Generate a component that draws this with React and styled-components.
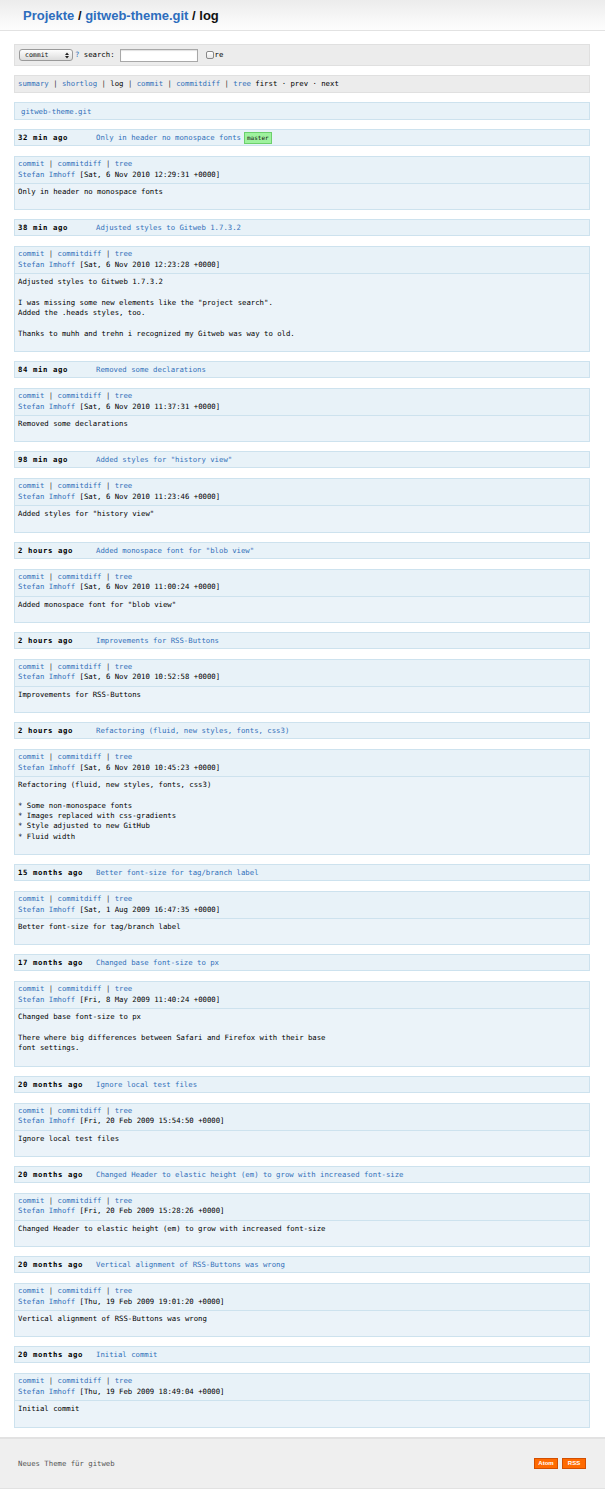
import React from "react";
import styled, { createGlobalStyle } from "styled-components";

const GlobalStyle = createGlobalStyle`
  html, body { margin: 0; padding: 0; background: #fff; }
  body {
    font-family: "DejaVu Sans Mono", "Liberation Mono", monospace;
    font-size: 7.3px;
    color: #000;
  }
  a { color: #3270b9; text-decoration: none; }
`;

const Header = styled.header`
  height: 31px;
  box-sizing: border-box;
  border-bottom: 1px solid #e2e2e2;
  background: linear-gradient(to bottom, #ececec 0%, #f7f7f7 60%, #fdfdfd 100%);
  display: flex;
  align-items: center;
  padding: 1px 0 0 23px;
`;

const Title = styled.h1`
  margin: 0;
  font-family: "Liberation Sans", Arial, sans-serif;
  font-size: 13px;
  font-weight: bold;
  color: #111;
  a { color: #2d6dbd; }
`;

const Main = styled.main`
  padding: 13px 15px 0 14px;
  display: flex;
  flex-direction: column;
`;

const GrayBar = styled.div`
  box-sizing: border-box;
  height: ${(p) => p.$h}px;
  background: #ececec;
  border: 1px solid #e0e0e0;
  display: flex;
  align-items: center;
  padding-left: ${(p) => p.$pl}px;
  margin-bottom: 9px;
  line-height: 10px;
  white-space: pre;
`;

const SelectBox = styled.div`
  box-sizing: border-box;
  width: 54px;
  height: 12px;
  border: 1px solid #9a9a9a;
  border-radius: 3px;
  background: linear-gradient(to bottom, #fdfdfd, #dcdcdc);
  display: flex;
  align-items: center;
  justify-content: space-between;
  padding: 0 3px 0 5px;
  font-size: 6.5px;
  color: #111;
`;

const Arrows = styled.svg`
  width: 4px;
  height: 7px;
  display: block;
`;

const Help = styled.span`
  color: #3270b9;
  margin-left: 2px;
`;

const SearchInput = styled.div`
  box-sizing: border-box;
  width: 78px;
  height: 13px;
  margin-left: 5px;
  background: #fff;
  border: 1px solid #a8a8a8;
  box-shadow: inset 0 1px 1px rgba(0,0,0,0.12);
`;

const CheckBox = styled.div`
  box-sizing: border-box;
  width: 8px;
  height: 8px;
  margin-left: 8px;
  margin-right: 1px;
  border: 1px solid #888;
  border-radius: 2px;
  background: linear-gradient(to bottom, #fff, #e6e6e6);
`;

const Sep = styled.span`
  color: #333;
`;

const Plain = styled.span`
  color: #000;
`;

const BlueBar = styled.div`
  box-sizing: border-box;
  background: #e8f2f8;
  border: 1px solid #cde2ee;
`;

const ProjectBar = styled(BlueBar)`
  height: 18px;
  display: flex;
  align-items: center;
  padding-left: 6px;
  margin-bottom: 9px;
`;

const CommitHead = styled(BlueBar)`
  height: 17px;
  display: flex;
  align-items: center;
  padding-left: 3px;
  margin-bottom: 10px;
  white-space: pre;
`;

const Age = styled.span`
  width: 78px;
  flex: none;
  font-weight: bold;
  letter-spacing: 0.6px;
  color: #000;
`;

const Badge = styled.span`
  display: inline-block;
  margin-left: 3px;
  padding: 0 2px;
  height: 10px;
  line-height: 10px;
  font-size: 6px;
  color: #111;
  background: #9ef29e;
  border: 1px solid #6cd06c;
`;

const CommitBody = styled(BlueBar)`
  margin-bottom: 9px;
  display: flex;
  flex-direction: column;
`;

const LinkBox = styled.div`
  padding: 2px 3px 3px;
  line-height: 10.5px;
  border-bottom: 1px solid #cde2ee;
  white-space: pre;
`;

const MsgBox = styled.div`
  padding: 3px 3px 12px;
  line-height: 10.3px;
  white-space: pre;
  background: #ebf3f9;
`;

const Footer = styled.footer`
  box-sizing: border-box;
  height: 52px;
  background: #efefef;
  border-top: 2px solid #e2e2e2;
  border-bottom: 1px solid #e2e2e2;
  display: flex;
  align-items: center;
  justify-content: space-between;
  padding: 0 19px 0 18px;
  color: #555;
`;

const FeedButtons = styled.div`
  display: flex;
  gap: 4px;
`;

const FeedButton = styled.span`
  box-sizing: border-box;
  width: 24px;
  height: 11px;
  display: flex;
  align-items: center;
  justify-content: center;
  background: #ff6a00;
  border: 1px solid #d24e00;
  color: #fff;
  font-family: "Liberation Sans", Arial, sans-serif;
  font-size: 6px;
  font-weight: bold;
`;

const commits = [
  { age: "32 min ago", title: "Only in header no monospace fonts", badge: "master", date: "Sat, 6 Nov 2010 12:29:31 +0000", msg: ["Only in header no monospace fonts"] },
  { age: "38 min ago", title: "Adjusted styles to Gitweb 1.7.3.2", date: "Sat, 6 Nov 2010 12:23:28 +0000", msg: ["Adjusted styles to Gitweb 1.7.3.2", "", "I was missing some new elements like the \"project search\".", "Added the .heads styles, too.", "", "Thanks to muhh and trehn i recognized my Gitweb was way to old."] },
  { age: "84 min ago", title: "Removed some declarations", date: "Sat, 6 Nov 2010 11:37:31 +0000", msg: ["Removed some declarations"] },
  { age: "98 min ago", title: "Added styles for \"history view\"", date: "Sat, 6 Nov 2010 11:23:46 +0000", msg: ["Added styles for \"history view\""] },
  { age: "2 hours ago", title: "Added monospace font for \"blob view\"", date: "Sat, 6 Nov 2010 11:00:24 +0000", msg: ["Added monospace font for \"blob view\""] },
  { age: "2 hours ago", title: "Improvements for RSS-Buttons", date: "Sat, 6 Nov 2010 10:52:58 +0000", msg: ["Improvements for RSS-Buttons"] },
  { age: "2 hours ago", title: "Refactoring (fluid, new styles, fonts, css3)", date: "Sat, 6 Nov 2010 10:45:23 +0000", msg: ["Refactoring (fluid, new styles, fonts, css3)", "", "* Some non-monospace fonts", "* Images replaced with css-gradients", "* Style adjusted to new GitHub", "* Fluid width"] },
  { age: "15 months ago", title: "Better font-size for tag/branch label", date: "Sat, 1 Aug 2009 16:47:35 +0000", msg: ["Better font-size for tag/branch label"] },
  { age: "17 months ago", title: "Changed base font-size to px", date: "Fri, 8 May 2009 11:40:24 +0000", msg: ["Changed base font-size to px", "", "There where big differences between Safari and Firefox with their base", "font settings."] },
  { age: "20 months ago", title: "Ignore local test files", date: "Fri, 20 Feb 2009 15:54:50 +0000", msg: ["Ignore local test files"] },
  { age: "20 months ago", title: "Changed Header to elastic height (em) to grow with increased font-size", date: "Fri, 20 Feb 2009 15:28:26 +0000", msg: ["Changed Header to elastic height (em) to grow with increased font-size"] },
  { age: "20 months ago", title: "Vertical alignment of RSS-Buttons was wrong", date: "Thu, 19 Feb 2009 19:01:20 +0000", msg: ["Vertical alignment of RSS-Buttons was wrong"] },
  { age: "20 months ago", title: "Initial commit", date: "Thu, 19 Feb 2009 18:49:04 +0000", msg: ["Initial commit"] },
];

function Commit({ c }) {
  return (
    <>
      <CommitHead>
        <Age>{c.age}</Age>
        <a href="#">{c.title}</a>
        {c.badge && <Badge>{c.badge}</Badge>}
      </CommitHead>
      <CommitBody>
        <LinkBox>
          <a href="#">commit</a>
          <Sep> | </Sep>
          <a href="#">commitdiff</a>
          <Sep> | </Sep>
          <a href="#">tree</a>
          {"\n"}
          <a href="#">Stefan Imhoff</a>
          <Plain> [{c.date}]</Plain>
        </LinkBox>
        <MsgBox>{c.msg.join("\n")}</MsgBox>
      </CommitBody>
    </>
  );
}

export default function App() {
  return (
    <>
      <GlobalStyle />
      <Header>
        <Title>
          <a href="#">Projekte</a> / <a href="#">gitweb-theme.git</a> / log
        </Title>
      </Header>
      <Main>
        <GrayBar $h={22} $pl={4}>
          <SelectBox>
            <span>commit</span>
            <Arrows viewBox="0 0 4 7">
              <path d="M0 3 L2 0.5 L4 3 Z M0 4 L2 6.5 L4 4 Z" fill="#222" />
            </Arrows>
          </SelectBox>
          <Help>?</Help>
          <span> search:</span>
          <SearchInput />
          <CheckBox />
          <span>re</span>
        </GrayBar>
        <GrayBar $h={18} $pl={3}>
          <a href="#">summary</a><Sep> | </Sep>
          <a href="#">shortlog</a><Sep> | </Sep>
          <Plain>log</Plain><Sep> | </Sep>
          <a href="#">commit</a><Sep> | </Sep>
          <a href="#">commitdiff</a><Sep> | </Sep>
          <a href="#">tree</a>
          <Plain> first · prev · next</Plain>
        </GrayBar>
        <ProjectBar>
          <a href="#">gitweb-theme.git</a>
        </ProjectBar>
        {commits.map((c, i) => (
          <Commit key={i} c={c} />
        ))}
      </Main>
      <Footer>
        <span>Neues Theme für gitweb</span>
        <FeedButtons>
          <FeedButton>Atom</FeedButton>
          <FeedButton>RSS</FeedButton>
        </FeedButtons>
      </Footer>
    </>
  );
}
